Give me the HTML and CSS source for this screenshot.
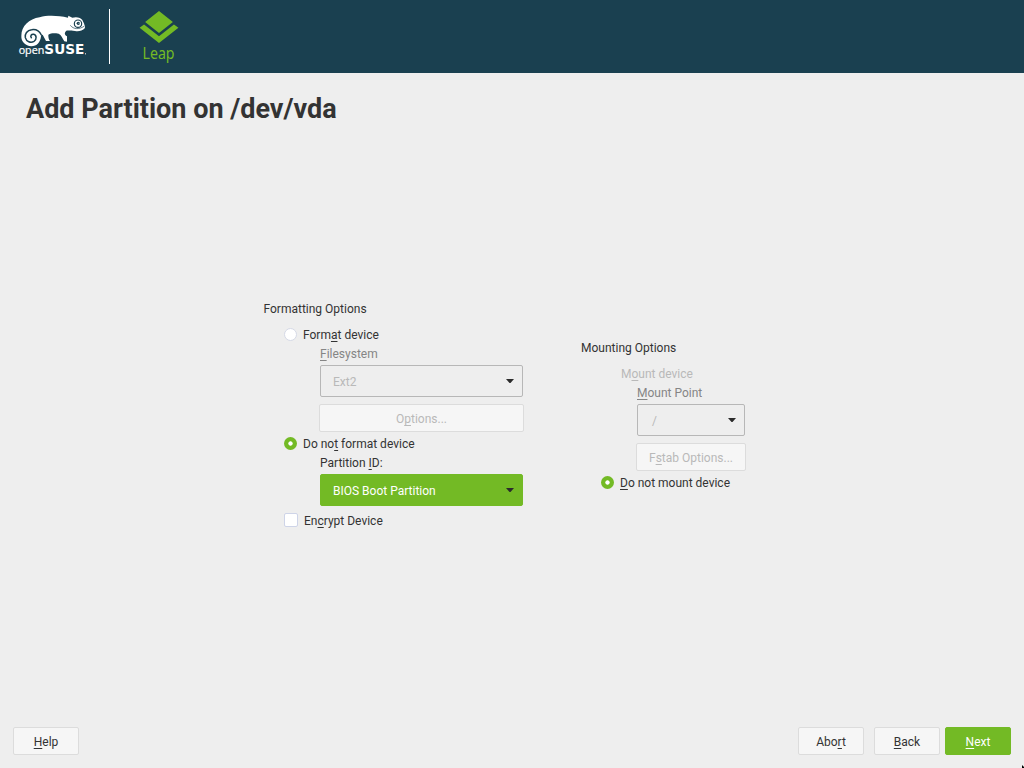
FILE: index.html
```html
<!DOCTYPE html>
<html lang="en">
<head>
<meta charset="utf-8">
<title>Add Partition</title>
<link rel="stylesheet" href="styles.css">
</head>
<body>
<header class="banner">
  <svg class="brand" viewBox="0 0 270 219" aria-label="openSUSE">
    <path fill="#fff" d="M34 108C34 78 57 57 89 52C113 45 145 47 174 53L175 47L187 53C200 49 213 53 217 60C220 67 225 74 225 84C217 93 205 95 195 93C181 92 172 90 168 93C164 98 162 104 171 109L171 125L163 124C158 115 154 105 146 101C132 99 124 99 115 104C115 112 116 118 120 123L108 123L98 104C94 104 93 107 93 109C91 127 81 139 64 139C46 137 33 125 34 108Z"/>
    <path fill="none" stroke="#1a4050" stroke-width="4.5" stroke-linecap="round" d="M94 105C88 93 77 87 65 89C51 91 44 102 46 113C49 125 62 130 72 124C81 118 80 105 71 103C64 102 60 108 64 113"/>
    <circle cx="204" cy="71" r="11" fill="#fff" stroke="#1a4050" stroke-width="3.5"/>
    <circle cx="205" cy="70" r="5" fill="#1a4050"/><circle cx="207" cy="70" r="1.5" fill="#fff"/>
    <path fill="none" stroke="#1a4050" stroke-width="2" d="M181 76C190 88 207 89 222 79"/>
    <text class="brand-open" x="26" y="163" textLength="77" lengthAdjust="spacingAndGlyphs">open</text>
    <text class="brand-suse" x="103" y="163" textLength="120" lengthAdjust="spacingAndGlyphs">SUSE</text>
    <rect x="225" y="160" width="3" height="3" fill="#fff"/>
  </svg>
  <div class="divider"></div>
  <div class="product">
    <svg class="leap" viewBox="0 0 40 34"><path fill="#73ba25" d="M20 0L34.3 11.3L20 22.6L5.7 11.3ZM0 17.2L4.6 13.8L20 26L35.4 13.8L40 17.2L20 33Z"/></svg>
    <svg class="product-name" viewBox="0 0 40 28"><text x="3.5" y="19" textLength="32" lengthAdjust="spacingAndGlyphs">Leap</text></svg>
  </div>
</header>
<h1 class="title">Add Partition on /dev/vda</h1>
<main class="content">
  <section class="group formatting">
    <h2 class="heading">Formatting Options</h2>
    <label class="choice"><i class="radio"></i><span>Form<u>a</u>t device</span></label>
    <div class="fields">
      <div class="caption muted"><u>F</u>ilesystem</div>
      <div class="combo"><span>Ext2</span><svg class="arrow" viewBox="0 0 8 5"><path d="M0 0H8L4.5 4H3.5Z"/></svg></div>
      <div class="button off wide">O<u>p</u>tions...</div>
    </div>
    <label class="choice second"><i class="radio on"></i><span>Do no<u>t</u> format device</span></label>
    <div class="fields">
      <div class="caption">Partition <u>I</u>D:</div>
      <div class="combo active"><span>BIOS Boot Partition</span><svg class="arrow" viewBox="0 0 8 5"><path d="M0 0H8L4.5 4H3.5Z"/></svg></div>
    </div>
    <label class="choice encrypt"><i class="check"></i><span>En<u>c</u>rypt Device</span></label>
  </section>
  <section class="group mounting">
    <h2 class="heading">Mounting Options</h2>
    <label class="choice disabled"><i class="radio hidden"></i><span>M<u>o</u>unt device</span></label>
    <div class="fields">
      <div class="caption muted"><u>M</u>ount Point</div>
      <div class="combo narrow"><span>/</span><svg class="arrow" viewBox="0 0 8 5"><path d="M0 0H8L4.5 4H3.5Z"/></svg></div>
      <div class="button off wide">F<u>s</u>tab Options...</div>
    </div>
    <label class="choice second"><i class="radio on"></i><span><u>D</u>o not mount device</span></label>
  </section>
</main>
<footer class="actions">
  <div class="button help"><u>H</u>elp</div>
  <div class="button abort">Abo<u>r</u>t</div>
  <div class="button back"><u>B</u>ack</div>
  <div class="button next"><u>N</u>ext</div>
</footer>
<svg class="pointer" viewBox="0 0 2 3"><path d="M0 0L2 2V3H0Z"/></svg>
</body>
</html>
```

FILE: styles.css
```css
* { box-sizing: border-box; }
body {
  margin: 0;
  width: 1024px;
  height: 768px;
  display: flex;
  flex-direction: column;
  overflow: hidden;
  background: #eee;
  color: #333;
  font: 12px/20px Roboto, sans-serif;
}
.banner {
  height: 73px;
  flex: none;
  display: flex;
  background: #1a4050;
  padding-left: 10px;
}
.brand { width: 90px; height: 73px; }
.brand text { fill: #fff; }
.brand-open { font: 35px "Open Sans", sans-serif; stroke: #fff; stroke-width: .7px; }
.brand-suse { font: bold 40px "DejaVu Sans", sans-serif; }
.divider { width: 1px; height: 55px; margin: 9px 0 0 9px; background: #fff; }
.product {
  width: 40px;
  margin: 11px 0 0 29px;
  display: flex;
  flex-direction: column;
  align-items: center;
}
.leap { width: 40px; height: 33px; flex: none; }
.product-name {
  width: 40px;
  height: 28px;
  flex: none;
  margin-top: -4px;
  overflow: visible;
  font: 15.5px "Noto Sans", sans-serif;
  fill: #73ba25;
}
.title {
  margin: 20px 0 0 26px;
  font-size: 27px;
  line-height: 32px;
  font-weight: 700;
}
.content { flex: 1; display: flex; align-items: flex-start; padding: 174px 0 0 263px; }
.group { display: flex; flex-direction: column; }
.formatting { width: 318px; }
.mounting { margin-top: 39px; }
.heading { margin: 0 0 6px; font-size: 12px; line-height: 20px; font-weight: 400; }
.formatting .heading { padding-left: .5px; }
.choice { height: 20px; display: flex; align-items: center; padding-left: 21px; }
.mounting .choice { padding-left: 20px; }
.second { margin-top: 2px; }
.encrypt { margin-top: 5px; }
.encrypt .check { margin: 0 6px 2px 0; }
u { text-decoration: underline 1px; text-underline-offset: 2px; text-decoration-skip-ink: none; }
.radio {
  width: 13px;
  height: 13px;
  margin: 0 6px 1px 0;
  border: 1px solid #d5d9e6;
  border-radius: 50%;
  background: #fff;
}
.radio.on { border: 0; background: radial-gradient(circle, #fff 0 1.8px, #73ba25 2.5px); }
.radio.hidden { visibility: hidden; margin-right: 7px; }
.check { width: 14px; height: 14px; border: 1px solid #ced4e8; border-radius: 2px; background: #fff; }
.disabled { color: #b9b9b9; }
.fields { padding-left: 57px; display: flex; flex-direction: column; }
.mounting .fields { padding-left: 56px; }
.caption { height: 19px; line-height: 19px; margin-bottom: 1px; }
.muted { color: #858585; }
.combo {
  width: 203px;
  height: 32px;
  display: flex;
  align-items: center;
  justify-content: space-between;
  padding: 1px 8px 0 12px;
  border: 1px solid #b7b7b7;
  border-radius: 2px;
  color: #b9b9b9;
}
.narrow { width: 108px; padding-left: 14px; }
.active { background: #73ba25; border-color: #73ba25; color: #fff; }
.arrow { width: 8px; height: 5px; fill: #2b2b2b; }
.button {
  width: 66px;
  height: 28px;
  border: 1px solid #dcdcdc;
  border-radius: 2px;
  background: #f6f6f6;
  text-align: center;
  line-height: 28px;
}
.off { color: #b9b9b9; }
.wide { width: 205px; margin: 7px 0 0 -1px; }
.mounting .wide { width: 110px; }
.actions { flex: none; height: 41px; display: flex; padding: 0 13px; }
.abort { margin-left: auto; }
.back { margin-left: 10px; }
.next { margin-left: 5px; background: #73ba25; border-color: #73ba25; color: #fff; }
.pointer { position: absolute; right: 0; bottom: 0; width: 2px; height: 3px; }
```
